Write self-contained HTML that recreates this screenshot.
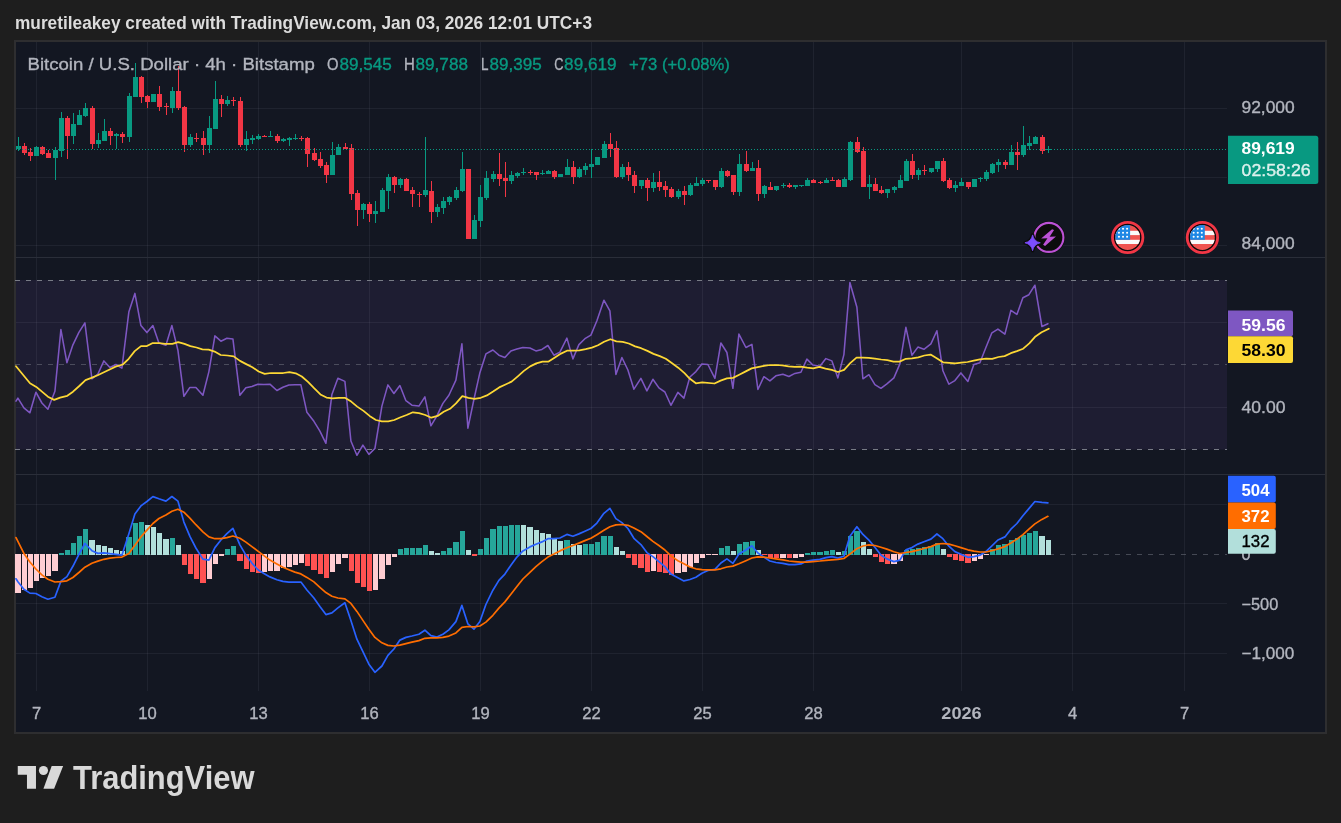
<!DOCTYPE html>
<html lang="en"><head><meta charset="utf-8"><title>BTCUSD chart</title>
<style>html,body{margin:0;padding:0;background:#1e1e1e;}body{width:1341px;height:823px;overflow:hidden}svg{display:block;will-change:transform}</style></head>
<body>
<svg width="1341" height="823" viewBox="0 0 1341 823" font-family="'Liberation Sans', sans-serif">
<rect width="1341" height="823" fill="#1e1e1e"/>
<text x="15" y="28.7" font-size="17.7" font-weight="bold" fill="#dcdcdc" textLength="577" lengthAdjust="spacingAndGlyphs">muretileakey created with TradingView.com, Jan 03, 2026 12:01 UTC+3</text>
<rect x="14" y="40" width="1313" height="694" fill="#2e2e30"/>
<rect x="16" y="42" width="1309" height="690" fill="#131722"/>
<rect x="16" y="280" width="1211" height="169.5" fill="rgba(126,87,194,0.1)"/>
<g shape-rendering="crispEdges" fill="rgba(240,243,250,0.06)">
<rect x="36" y="42" width="1" height="649"/>
<rect x="147" y="42" width="1" height="649"/>
<rect x="258" y="42" width="1" height="649"/>
<rect x="369" y="42" width="1" height="649"/>
<rect x="480" y="42" width="1" height="649"/>
<rect x="591" y="42" width="1" height="649"/>
<rect x="702" y="42" width="1" height="649"/>
<rect x="813" y="42" width="1" height="649"/>
<rect x="961" y="42" width="1" height="649"/>
<rect x="1072" y="42" width="1" height="649"/>
<rect x="1184" y="42" width="1" height="649"/>
<rect x="16" y="108" width="1211" height="1"/>
<rect x="16" y="177" width="1211" height="1"/>
<rect x="16" y="245" width="1211" height="1"/>
<rect x="16" y="322" width="1211" height="1"/>
<rect x="16" y="407" width="1211" height="1"/>
<rect x="16" y="504" width="1211" height="1"/>
<rect x="16" y="603" width="1211" height="1"/>
<rect x="16" y="653" width="1211" height="1"/>
</g>
<g shape-rendering="crispEdges" fill="#2a2e39"><rect x="16" y="257" width="1309" height="1"/><rect x="16" y="474" width="1309" height="1"/></g>
<g shape-rendering="crispEdges" fill="none" stroke-width="1" stroke-dasharray="5 6">
<path d="M15 280.5H1227" stroke="#787b86"/>
<path d="M15 449.5H1227" stroke="#787b86"/>
<path d="M15 364.5H1227" stroke="#787b86" stroke-opacity="0.5"/>
<path d="M15 554.5H1227" stroke="#787b86" stroke-opacity="0.5"/>
</g>
<g shape-rendering="crispEdges" fill="#089981"><rect x="18" y="137" width="1" height="14"/><rect x="16" y="146" width="5" height="3"/><rect x="36" y="146" width="1" height="10"/><rect x="34" y="147" width="5" height="9"/><rect x="55" y="147" width="1" height="33"/><rect x="53" y="150" width="5" height="8"/><rect x="61" y="112" width="1" height="45"/><rect x="59" y="118" width="5" height="33"/><rect x="73" y="113" width="1" height="31"/><rect x="71" y="124" width="5" height="12"/><rect x="79" y="110" width="1" height="15"/><rect x="77" y="115" width="5" height="10"/><rect x="85" y="103" width="1" height="14"/><rect x="83" y="108" width="5" height="8"/><rect x="98" y="133" width="1" height="15"/><rect x="96" y="140" width="5" height="4"/><rect x="104" y="119" width="1" height="22"/><rect x="102" y="131" width="5" height="10"/><rect x="116" y="133" width="1" height="16"/><rect x="114" y="134" width="5" height="2"/><rect x="129" y="93" width="1" height="49"/><rect x="127" y="96" width="5" height="41"/><rect x="135" y="63" width="1" height="34"/><rect x="133" y="77" width="5" height="20"/><rect x="153" y="94" width="1" height="8"/><rect x="151" y="94" width="5" height="8"/><rect x="172" y="87" width="1" height="26"/><rect x="170" y="91" width="5" height="17"/><rect x="190" y="134" width="1" height="13"/><rect x="188" y="137" width="5" height="8"/><rect x="209" y="116" width="1" height="37"/><rect x="207" y="128" width="5" height="17"/><rect x="215" y="81" width="1" height="48"/><rect x="213" y="99" width="5" height="30"/><rect x="227" y="96" width="1" height="10"/><rect x="225" y="100" width="5" height="4"/><rect x="246" y="131" width="1" height="20"/><rect x="244" y="139" width="5" height="6"/><rect x="252" y="135" width="1" height="9"/><rect x="250" y="138" width="5" height="2"/><rect x="258" y="134" width="1" height="6"/><rect x="256" y="136" width="5" height="3"/><rect x="270" y="131" width="1" height="6"/><rect x="268" y="136" width="5" height="1"/><rect x="283" y="138" width="1" height="4"/><rect x="281" y="139" width="5" height="2"/><rect x="289" y="137" width="1" height="9"/><rect x="287" y="138" width="5" height="2"/><rect x="295" y="134" width="1" height="6"/><rect x="293" y="138" width="5" height="1"/><rect x="332" y="142" width="1" height="33"/><rect x="330" y="155" width="5" height="20"/><rect x="338" y="144" width="1" height="11"/><rect x="336" y="147" width="5" height="8"/><rect x="363" y="203" width="1" height="16"/><rect x="361" y="204" width="5" height="6"/><rect x="375" y="201" width="1" height="22"/><rect x="373" y="211" width="5" height="3"/><rect x="382" y="188" width="1" height="24"/><rect x="380" y="190" width="5" height="22"/><rect x="388" y="174" width="1" height="35"/><rect x="386" y="177" width="5" height="14"/><rect x="400" y="178" width="1" height="10"/><rect x="398" y="179" width="5" height="6"/><rect x="425" y="137" width="1" height="60"/><rect x="423" y="190" width="5" height="5"/><rect x="437" y="204" width="1" height="13"/><rect x="435" y="207" width="5" height="5"/><rect x="443" y="197" width="1" height="17"/><rect x="441" y="201" width="5" height="7"/><rect x="449" y="196" width="1" height="9"/><rect x="447" y="197" width="5" height="5"/><rect x="456" y="187" width="1" height="13"/><rect x="454" y="190" width="5" height="8"/><rect x="462" y="152" width="1" height="40"/><rect x="460" y="169" width="5" height="22"/><rect x="474" y="215" width="1" height="24"/><rect x="472" y="220" width="5" height="19"/><rect x="480" y="185" width="1" height="42"/><rect x="478" y="197" width="5" height="24"/><rect x="486" y="171" width="1" height="29"/><rect x="484" y="178" width="5" height="20"/><rect x="493" y="171" width="1" height="11"/><rect x="491" y="174" width="5" height="5"/><rect x="511" y="171" width="1" height="13"/><rect x="509" y="175" width="5" height="6"/><rect x="517" y="172" width="1" height="6"/><rect x="515" y="173" width="5" height="3"/><rect x="523" y="168" width="1" height="7"/><rect x="521" y="172" width="5" height="1"/><rect x="542" y="170" width="1" height="5"/><rect x="540" y="173" width="5" height="1"/><rect x="548" y="170" width="1" height="4"/><rect x="546" y="171" width="5" height="3"/><rect x="560" y="174" width="1" height="3"/><rect x="558" y="174" width="5" height="3"/><rect x="567" y="159" width="1" height="16"/><rect x="565" y="167" width="5" height="8"/><rect x="579" y="167" width="1" height="11"/><rect x="577" y="169" width="5" height="8"/><rect x="585" y="163" width="1" height="12"/><rect x="583" y="166" width="5" height="4"/><rect x="591" y="149" width="1" height="29"/><rect x="589" y="164" width="5" height="3"/><rect x="597" y="157" width="1" height="8"/><rect x="595" y="157" width="5" height="8"/><rect x="604" y="141" width="1" height="17"/><rect x="602" y="144" width="5" height="14"/><rect x="622" y="164" width="1" height="15"/><rect x="620" y="167" width="5" height="10"/><rect x="641" y="180" width="1" height="9"/><rect x="639" y="180" width="5" height="6"/><rect x="653" y="173" width="1" height="19"/><rect x="651" y="182" width="5" height="6"/><rect x="678" y="189" width="1" height="10"/><rect x="676" y="191" width="5" height="6"/><rect x="690" y="183" width="1" height="13"/><rect x="688" y="185" width="5" height="10"/><rect x="696" y="177" width="1" height="9"/><rect x="694" y="183" width="5" height="3"/><rect x="702" y="178" width="1" height="8"/><rect x="700" y="180" width="5" height="4"/><rect x="721" y="168" width="1" height="20"/><rect x="719" y="171" width="5" height="16"/><rect x="739" y="154" width="1" height="42"/><rect x="737" y="164" width="5" height="28"/><rect x="752" y="162" width="1" height="9"/><rect x="750" y="168" width="5" height="3"/><rect x="764" y="185" width="1" height="13"/><rect x="762" y="186" width="5" height="8"/><rect x="776" y="186" width="1" height="5"/><rect x="774" y="186" width="5" height="4"/><rect x="783" y="183" width="1" height="5"/><rect x="781" y="185" width="5" height="1"/><rect x="795" y="185" width="1" height="4"/><rect x="793" y="185" width="5" height="2"/><rect x="801" y="185" width="1" height="2"/><rect x="799" y="185" width="5" height="1"/><rect x="807" y="178" width="1" height="8"/><rect x="805" y="180" width="5" height="6"/><rect x="826" y="178" width="1" height="5"/><rect x="824" y="180" width="5" height="3"/><rect x="844" y="177" width="1" height="10"/><rect x="842" y="179" width="5" height="8"/><rect x="850" y="141" width="1" height="40"/><rect x="848" y="142" width="5" height="38"/><rect x="869" y="175" width="1" height="24"/><rect x="867" y="184" width="5" height="3"/><rect x="887" y="189" width="1" height="9"/><rect x="885" y="189" width="5" height="4"/><rect x="894" y="186" width="1" height="7"/><rect x="892" y="187" width="5" height="3"/><rect x="900" y="175" width="1" height="13"/><rect x="898" y="180" width="5" height="8"/><rect x="906" y="159" width="1" height="22"/><rect x="904" y="161" width="5" height="20"/><rect x="918" y="168" width="1" height="12"/><rect x="916" y="170" width="5" height="5"/><rect x="931" y="168" width="1" height="5"/><rect x="929" y="168" width="5" height="4"/><rect x="937" y="161" width="1" height="11"/><rect x="935" y="161" width="5" height="8"/><rect x="955" y="181" width="1" height="11"/><rect x="953" y="185" width="5" height="3"/><rect x="961" y="178" width="1" height="8"/><rect x="959" y="182" width="5" height="4"/><rect x="974" y="179" width="1" height="8"/><rect x="972" y="179" width="5" height="8"/><rect x="980" y="177" width="1" height="5"/><rect x="978" y="178" width="5" height="1"/><rect x="986" y="170" width="1" height="11"/><rect x="984" y="172" width="5" height="7"/><rect x="992" y="163" width="1" height="11"/><rect x="990" y="164" width="5" height="9"/><rect x="998" y="159" width="1" height="13"/><rect x="996" y="162" width="5" height="3"/><rect x="1011" y="145" width="1" height="20"/><rect x="1009" y="152" width="5" height="13"/><rect x="1023" y="126" width="1" height="31"/><rect x="1021" y="145" width="5" height="10"/><rect x="1029" y="136" width="1" height="14"/><rect x="1027" y="143" width="5" height="3"/><rect x="1035" y="136" width="1" height="8"/><rect x="1033" y="137" width="5" height="7"/><rect x="1048" y="146" width="1" height="7"/><rect x="1046" y="149" width="5" height="1"/></g>
<g shape-rendering="crispEdges" fill="#f23645"><rect x="24" y="143" width="1" height="12"/><rect x="22" y="146" width="5" height="7"/><rect x="30" y="148" width="1" height="13"/><rect x="28" y="152" width="5" height="4"/><rect x="42" y="146" width="1" height="9"/><rect x="40" y="147" width="5" height="7"/><rect x="48" y="150" width="1" height="8"/><rect x="46" y="153" width="5" height="5"/><rect x="67" y="116" width="1" height="43"/><rect x="65" y="118" width="5" height="18"/><rect x="92" y="106" width="1" height="43"/><rect x="90" y="108" width="5" height="36"/><rect x="110" y="128" width="1" height="17"/><rect x="108" y="131" width="5" height="5"/><rect x="122" y="132" width="1" height="11"/><rect x="120" y="134" width="5" height="3"/><rect x="141" y="76" width="1" height="27"/><rect x="139" y="77" width="5" height="20"/><rect x="147" y="95" width="1" height="13"/><rect x="145" y="96" width="5" height="6"/><rect x="159" y="86" width="1" height="25"/><rect x="157" y="94" width="5" height="13"/><rect x="166" y="103" width="1" height="12"/><rect x="164" y="106" width="5" height="1"/><rect x="178" y="66" width="1" height="44"/><rect x="176" y="91" width="5" height="17"/><rect x="184" y="106" width="1" height="46"/><rect x="182" y="107" width="5" height="38"/><rect x="196" y="133" width="1" height="9"/><rect x="194" y="138" width="5" height="1"/><rect x="203" y="131" width="1" height="24"/><rect x="201" y="138" width="5" height="7"/><rect x="221" y="95" width="1" height="22"/><rect x="219" y="99" width="5" height="5"/><rect x="233" y="97" width="1" height="9"/><rect x="231" y="100" width="5" height="1"/><rect x="240" y="97" width="1" height="50"/><rect x="238" y="101" width="5" height="44"/><rect x="264" y="135" width="1" height="2"/><rect x="262" y="136" width="5" height="1"/><rect x="277" y="134" width="1" height="9"/><rect x="275" y="136" width="5" height="5"/><rect x="301" y="136" width="1" height="5"/><rect x="299" y="138" width="5" height="1"/><rect x="307" y="137" width="1" height="30"/><rect x="305" y="138" width="5" height="16"/><rect x="314" y="148" width="1" height="13"/><rect x="312" y="153" width="5" height="7"/><rect x="320" y="152" width="1" height="16"/><rect x="318" y="159" width="5" height="7"/><rect x="326" y="162" width="1" height="21"/><rect x="324" y="165" width="5" height="10"/><rect x="345" y="143" width="1" height="6"/><rect x="343" y="147" width="5" height="2"/><rect x="351" y="144" width="1" height="56"/><rect x="349" y="148" width="5" height="46"/><rect x="357" y="190" width="1" height="36"/><rect x="355" y="193" width="5" height="17"/><rect x="369" y="202" width="1" height="20"/><rect x="367" y="204" width="5" height="10"/><rect x="394" y="176" width="1" height="17"/><rect x="392" y="177" width="5" height="8"/><rect x="406" y="178" width="1" height="13"/><rect x="404" y="179" width="5" height="12"/><rect x="412" y="187" width="1" height="20"/><rect x="410" y="190" width="5" height="4"/><rect x="419" y="192" width="1" height="15"/><rect x="417" y="194" width="5" height="1"/><rect x="431" y="181" width="1" height="42"/><rect x="429" y="191" width="5" height="21"/><rect x="468" y="169" width="1" height="70"/><rect x="466" y="169" width="5" height="70"/><rect x="499" y="153" width="1" height="33"/><rect x="497" y="174" width="5" height="5"/><rect x="505" y="162" width="1" height="35"/><rect x="503" y="178" width="5" height="3"/><rect x="530" y="170" width="1" height="5"/><rect x="528" y="172" width="5" height="1"/><rect x="536" y="172" width="1" height="8"/><rect x="534" y="172" width="5" height="3"/><rect x="554" y="170" width="1" height="9"/><rect x="552" y="171" width="5" height="6"/><rect x="573" y="161" width="1" height="23"/><rect x="571" y="167" width="5" height="10"/><rect x="610" y="133" width="1" height="24"/><rect x="608" y="144" width="5" height="5"/><rect x="616" y="141" width="1" height="37"/><rect x="614" y="148" width="5" height="29"/><rect x="628" y="162" width="1" height="19"/><rect x="626" y="167" width="5" height="8"/><rect x="634" y="171" width="1" height="22"/><rect x="632" y="175" width="5" height="11"/><rect x="647" y="178" width="1" height="23"/><rect x="645" y="180" width="5" height="8"/><rect x="659" y="171" width="1" height="20"/><rect x="657" y="182" width="5" height="5"/><rect x="665" y="181" width="1" height="16"/><rect x="663" y="186" width="5" height="4"/><rect x="671" y="187" width="1" height="11"/><rect x="669" y="189" width="5" height="8"/><rect x="684" y="186" width="1" height="19"/><rect x="682" y="191" width="5" height="4"/><rect x="708" y="180" width="1" height="3"/><rect x="706" y="180" width="5" height="1"/><rect x="715" y="180" width="1" height="10"/><rect x="713" y="180" width="5" height="7"/><rect x="727" y="170" width="1" height="7"/><rect x="725" y="171" width="5" height="5"/><rect x="733" y="175" width="1" height="20"/><rect x="731" y="175" width="5" height="17"/><rect x="746" y="151" width="1" height="21"/><rect x="744" y="164" width="5" height="7"/><rect x="758" y="160" width="1" height="41"/><rect x="756" y="168" width="5" height="26"/><rect x="770" y="182" width="1" height="8"/><rect x="768" y="187" width="5" height="3"/><rect x="789" y="183" width="1" height="5"/><rect x="787" y="185" width="5" height="2"/><rect x="813" y="179" width="1" height="4"/><rect x="811" y="180" width="5" height="3"/><rect x="820" y="181" width="1" height="3"/><rect x="818" y="182" width="5" height="1"/><rect x="832" y="177" width="1" height="4"/><rect x="830" y="180" width="5" height="1"/><rect x="838" y="179" width="1" height="8"/><rect x="836" y="180" width="5" height="7"/><rect x="857" y="137" width="1" height="16"/><rect x="855" y="142" width="5" height="10"/><rect x="863" y="147" width="1" height="40"/><rect x="861" y="151" width="5" height="36"/><rect x="875" y="178" width="1" height="13"/><rect x="873" y="184" width="5" height="7"/><rect x="881" y="186" width="1" height="8"/><rect x="879" y="190" width="5" height="3"/><rect x="912" y="154" width="1" height="25"/><rect x="910" y="161" width="5" height="14"/><rect x="924" y="165" width="1" height="10"/><rect x="922" y="170" width="5" height="1"/><rect x="943" y="158" width="1" height="24"/><rect x="941" y="161" width="5" height="20"/><rect x="949" y="178" width="1" height="11"/><rect x="947" y="180" width="5" height="8"/><rect x="968" y="182" width="1" height="7"/><rect x="966" y="182" width="5" height="5"/><rect x="1005" y="160" width="1" height="9"/><rect x="1003" y="162" width="5" height="3"/><rect x="1017" y="142" width="1" height="28"/><rect x="1015" y="152" width="5" height="3"/><rect x="1042" y="135" width="1" height="19"/><rect x="1040" y="137" width="5" height="14"/></g>
<path d="M16 149.5H1227" stroke="#089981" stroke-width="1" stroke-dasharray="1 2" shape-rendering="crispEdges"/>
<g shape-rendering="crispEdges" fill="#26a69a"><rect x="59" y="553" width="5" height="2"/><rect x="65" y="550" width="5" height="5"/><rect x="71" y="543" width="5" height="12"/><rect x="77" y="536" width="5" height="19"/><rect x="83" y="529" width="5" height="26"/><rect x="126" y="537" width="6" height="18"/><rect x="133" y="523" width="5" height="32"/><rect x="139" y="522" width="5" height="33"/><rect x="170" y="538" width="5" height="17"/><rect x="225" y="549" width="5" height="6"/><rect x="231" y="546" width="5" height="9"/><rect x="398" y="549" width="5" height="6"/><rect x="404" y="548" width="5" height="7"/><rect x="410" y="548" width="5" height="7"/><rect x="416" y="548" width="6" height="7"/><rect x="423" y="545" width="5" height="10"/><rect x="441" y="551" width="5" height="4"/><rect x="447" y="548" width="5" height="7"/><rect x="453" y="542" width="6" height="13"/><rect x="460" y="531" width="5" height="24"/><rect x="478" y="549" width="5" height="6"/><rect x="484" y="538" width="5" height="17"/><rect x="490" y="529" width="6" height="26"/><rect x="497" y="526" width="5" height="29"/><rect x="503" y="526" width="5" height="29"/><rect x="509" y="525" width="5" height="30"/><rect x="515" y="525" width="5" height="30"/><rect x="564" y="540" width="6" height="15"/><rect x="583" y="544" width="5" height="11"/><rect x="589" y="544" width="5" height="11"/><rect x="595" y="542" width="5" height="13"/><rect x="601" y="536" width="6" height="19"/><rect x="608" y="536" width="5" height="19"/><rect x="719" y="548" width="5" height="7"/><rect x="725" y="546" width="5" height="9"/><rect x="737" y="544" width="5" height="11"/><rect x="743" y="542" width="6" height="13"/><rect x="750" y="541" width="5" height="14"/><rect x="805" y="553" width="5" height="2"/><rect x="811" y="552" width="5" height="3"/><rect x="817" y="552" width="6" height="3"/><rect x="824" y="551" width="5" height="4"/><rect x="830" y="550" width="5" height="5"/><rect x="842" y="551" width="5" height="4"/><rect x="848" y="536" width="5" height="19"/><rect x="854" y="531" width="6" height="24"/><rect x="904" y="550" width="5" height="5"/><rect x="910" y="549" width="5" height="6"/><rect x="916" y="548" width="5" height="7"/><rect x="922" y="547" width="5" height="8"/><rect x="928" y="546" width="6" height="9"/><rect x="935" y="543" width="5" height="12"/><rect x="990" y="549" width="5" height="6"/><rect x="996" y="545" width="5" height="10"/><rect x="1002" y="544" width="6" height="11"/><rect x="1009" y="540" width="5" height="15"/><rect x="1015" y="538" width="5" height="17"/><rect x="1021" y="535" width="5" height="20"/><rect x="1027" y="533" width="5" height="22"/><rect x="1033" y="531" width="5" height="24"/></g>
<g shape-rendering="crispEdges" fill="#b2dfdb"><rect x="89" y="540" width="6" height="15"/><rect x="96" y="545" width="5" height="10"/><rect x="102" y="546" width="5" height="9"/><rect x="108" y="548" width="5" height="7"/><rect x="114" y="550" width="5" height="5"/><rect x="120" y="551" width="5" height="4"/><rect x="145" y="525" width="5" height="30"/><rect x="151" y="527" width="5" height="28"/><rect x="157" y="533" width="5" height="22"/><rect x="163" y="539" width="6" height="16"/><rect x="176" y="545" width="5" height="10"/><rect x="429" y="551" width="5" height="4"/><rect x="435" y="553" width="5" height="2"/><rect x="466" y="550" width="5" height="5"/><rect x="521" y="525" width="5" height="30"/><rect x="527" y="527" width="6" height="28"/><rect x="534" y="530" width="5" height="25"/><rect x="540" y="533" width="5" height="22"/><rect x="546" y="534" width="5" height="21"/><rect x="552" y="539" width="5" height="16"/><rect x="558" y="541" width="5" height="14"/><rect x="571" y="544" width="5" height="11"/><rect x="577" y="545" width="5" height="10"/><rect x="614" y="547" width="5" height="8"/><rect x="620" y="551" width="5" height="4"/><rect x="731" y="551" width="5" height="4"/><rect x="756" y="550" width="5" height="5"/><rect x="836" y="552" width="5" height="3"/><rect x="861" y="542" width="5" height="13"/><rect x="867" y="549" width="5" height="6"/><rect x="941" y="549" width="5" height="6"/><rect x="1039" y="536" width="6" height="19"/><rect x="1046" y="540" width="5" height="15"/></g>
<g shape-rendering="crispEdges" fill="#ffcdd2"><rect x="15" y="554" width="6" height="39"/><rect x="22" y="554" width="5" height="36"/><rect x="28" y="554" width="5" height="34"/><rect x="34" y="554" width="5" height="27"/><rect x="40" y="554" width="5" height="24"/><rect x="46" y="554" width="5" height="22"/><rect x="52" y="554" width="6" height="17"/><rect x="207" y="554" width="5" height="25"/><rect x="213" y="554" width="5" height="10"/><rect x="219" y="554" width="5" height="2"/><rect x="262" y="554" width="5" height="18"/><rect x="268" y="554" width="5" height="17"/><rect x="274" y="554" width="6" height="17"/><rect x="281" y="554" width="5" height="14"/><rect x="287" y="554" width="5" height="13"/><rect x="293" y="554" width="5" height="11"/><rect x="299" y="554" width="5" height="9"/><rect x="330" y="554" width="5" height="18"/><rect x="336" y="554" width="5" height="10"/><rect x="342" y="554" width="6" height="4"/><rect x="373" y="554" width="5" height="36"/><rect x="379" y="554" width="6" height="25"/><rect x="386" y="554" width="5" height="11"/><rect x="392" y="554" width="5" height="3"/><rect x="651" y="554" width="5" height="17"/><rect x="675" y="554" width="6" height="19"/><rect x="682" y="554" width="5" height="18"/><rect x="688" y="554" width="5" height="13"/><rect x="694" y="554" width="5" height="9"/><rect x="700" y="554" width="5" height="4"/><rect x="706" y="554" width="5" height="1"/><rect x="712" y="554" width="6" height="1"/><rect x="780" y="554" width="6" height="4"/><rect x="793" y="554" width="5" height="4"/><rect x="799" y="554" width="5" height="3"/><rect x="891" y="554" width="6" height="10"/><rect x="898" y="554" width="5" height="7"/><rect x="972" y="554" width="5" height="7"/><rect x="978" y="554" width="5" height="5"/><rect x="984" y="554" width="5" height="1"/></g>
<g shape-rendering="crispEdges" fill="#ff5252"><rect x="182" y="554" width="5" height="11"/><rect x="188" y="554" width="5" height="20"/><rect x="194" y="554" width="5" height="25"/><rect x="200" y="554" width="6" height="29"/><rect x="237" y="554" width="6" height="7"/><rect x="244" y="554" width="5" height="15"/><rect x="250" y="554" width="5" height="18"/><rect x="256" y="554" width="5" height="19"/><rect x="305" y="554" width="5" height="12"/><rect x="311" y="554" width="6" height="16"/><rect x="318" y="554" width="5" height="20"/><rect x="324" y="554" width="5" height="24"/><rect x="349" y="554" width="5" height="17"/><rect x="355" y="554" width="5" height="29"/><rect x="361" y="554" width="5" height="33"/><rect x="367" y="554" width="5" height="37"/><rect x="472" y="554" width="5" height="2"/><rect x="626" y="554" width="5" height="4"/><rect x="632" y="554" width="5" height="11"/><rect x="638" y="554" width="6" height="14"/><rect x="645" y="554" width="5" height="18"/><rect x="657" y="554" width="5" height="18"/><rect x="663" y="554" width="5" height="19"/><rect x="669" y="554" width="5" height="21"/><rect x="762" y="554" width="5" height="1"/><rect x="768" y="554" width="5" height="4"/><rect x="774" y="554" width="5" height="4"/><rect x="787" y="554" width="5" height="4"/><rect x="873" y="554" width="5" height="3"/><rect x="879" y="554" width="5" height="8"/><rect x="885" y="554" width="5" height="10"/><rect x="947" y="554" width="5" height="3"/><rect x="953" y="554" width="5" height="6"/><rect x="959" y="554" width="5" height="7"/><rect x="965" y="554" width="6" height="9"/></g>
<path d="M16.0 401.2 L17.9 398.1 L23.9 407.8 L29.9 412.8 L35.9 392.2 L41.9 403.0 L47.9 409.2 L54.9 391.3 L60.9 329.6 L66.9 362.7 L72.9 344.8 L78.9 332.3 L84.9 322.8 L91.9 378.8 L97.9 374.0 L103.9 360.9 L109.9 367.5 L115.9 364.5 L121.9 368.1 L128.9 311.7 L134.9 293.4 L140.9 325.6 L146.9 332.6 L152.9 325.6 L158.9 343.0 L165.9 345.3 L171.9 325.6 L177.9 350.2 L183.9 396.3 L189.9 387.4 L195.9 387.4 L202.9 395.3 L208.9 371.6 L214.9 335.9 L220.9 341.2 L226.9 338.2 L232.9 338.9 L239.9 395.3 L245.9 387.8 L251.9 386.4 L257.9 384.2 L263.9 384.6 L269.9 384.2 L276.9 390.5 L282.9 387.3 L288.9 385.1 L294.9 384.8 L300.9 384.8 L306.9 412.3 L313.9 421.3 L319.9 431.1 L325.9 443.3 L331.9 394.4 L337.9 378.3 L344.9 381.4 L350.9 441.0 L356.9 455.3 L362.9 445.1 L368.9 454.4 L374.9 448.5 L381.9 406.1 L387.9 384.9 L393.9 393.5 L399.9 385.5 L405.9 400.7 L411.9 405.2 L418.9 406.1 L424.9 396.8 L430.9 425.8 L436.9 415.9 L442.9 403.4 L448.9 395.3 L455.9 380.1 L461.9 343.8 L467.9 428.2 L473.9 399.5 L479.9 372.7 L485.9 353.9 L492.9 350.0 L498.9 355.2 L504.9 357.5 L510.9 350.9 L516.9 349.1 L522.9 347.6 L529.9 348.0 L535.9 350.9 L541.9 349.4 L547.9 345.5 L553.9 355.2 L559.9 352.1 L566.9 338.1 L572.9 358.9 L578.9 344.6 L584.9 338.7 L590.9 335.1 L596.9 320.8 L603.9 300.2 L609.9 310.9 L615.9 374.5 L621.9 357.5 L627.9 370.0 L633.9 389.2 L640.9 378.4 L646.9 390.9 L652.9 379.3 L658.9 387.9 L664.9 392.0 L670.9 405.3 L677.9 392.4 L683.9 398.1 L689.9 377.0 L695.9 371.6 L701.9 363.9 L707.9 364.5 L714.9 378.4 L720.9 343.0 L726.9 352.5 L732.9 388.3 L738.9 334.1 L745.9 347.5 L751.9 344.4 L757.9 389.5 L763.9 376.7 L769.9 380.9 L775.9 375.8 L782.9 374.3 L788.9 376.5 L794.9 373.4 L800.9 372.2 L806.9 359.1 L812.9 365.0 L819.9 366.3 L825.9 358.6 L831.9 360.9 L837.9 377.9 L843.9 354.6 L849.9 282.5 L856.9 307.2 L862.9 378.8 L868.9 374.7 L874.9 384.7 L880.9 388.3 L886.9 383.8 L893.9 377.9 L899.9 363.9 L905.9 327.3 L911.9 355.2 L917.9 347.1 L923.9 349.3 L930.9 343.9 L936.9 330.8 L942.9 370.8 L948.9 384.2 L954.9 380.6 L960.9 372.9 L967.9 381.5 L973.9 364.5 L979.9 362.7 L985.9 347.5 L991.9 332.8 L997.9 329.1 L1004.9 334.1 L1010.9 310.4 L1016.9 314.4 L1022.9 297.7 L1028.9 294.7 L1034.9 285.2 L1041.9 326.5 L1047.9 323.7" fill="none" stroke="#7e57c2" stroke-width="1.55" stroke-linejoin="round" stroke-linecap="round"/>
<path d="M16.0 366.3 L30.0 383.3 L36.3 386.9 L47.9 396.7 L54.2 399.9 L60.1 397.6 L67.3 395.8 L73.0 391.7 L79.3 386.0 L85.5 380.1 L91.4 377.9 L97.7 375.2 L103.4 372.5 L109.7 369.5 L115.6 366.6 L122.8 364.5 L128.7 358.8 L134.7 351.1 L141.0 346.1 L146.9 346.1 L152.8 343.0 L158.9 343.0 L165.0 343.9 L172.3 343.9 L178.2 342.1 L184.5 343.9 L190.4 346.1 L196.5 347.5 L202.4 349.3 L208.7 349.6 L214.6 351.6 L220.7 355.0 L227.4 355.5 L233.7 356.4 L240.0 360.9 L246.2 364.1 L252.4 367.2 L258.6 371.5 L264.7 373.9 L271.0 373.0 L283.3 373.0 L289.4 372.1 L295.7 373.3 L301.8 376.5 L308.0 381.9 L314.1 388.2 L320.4 394.4 L326.5 397.6 L332.6 398.4 L338.8 397.8 L344.9 397.8 L351.2 401.6 L357.2 406.6 L363.5 410.9 L369.6 415.9 L375.9 420.0 L381.9 421.3 L388.2 421.3 L394.3 420.0 L400.6 417.2 L406.6 415.0 L412.9 412.3 L419.0 413.2 L425.3 415.0 L431.3 417.7 L437.6 415.9 L443.7 411.8 L450.0 408.8 L456.0 403.4 L462.3 396.2 L468.4 397.8 L474.5 398.8 L480.8 397.8 L486.9 395.4 L493.1 391.5 L499.2 387.4 L505.5 384.5 L511.6 381.6 L517.8 376.3 L523.9 370.9 L530.2 366.4 L536.3 363.4 L542.5 361.6 L548.6 361.6 L554.9 357.5 L561.0 353.6 L567.0 350.7 L573.3 350.7 L579.4 350.3 L585.7 349.1 L591.9 347.6 L598.0 345.3 L604.1 341.7 L610.4 339.2 L616.4 341.4 L622.7 341.9 L628.8 343.5 L635.1 346.4 L641.1 348.2 L647.4 350.9 L653.5 353.9 L659.8 356.1 L665.8 358.7 L672.1 363.2 L678.2 367.7 L684.5 373.1 L689.9 378.8 L695.9 383.3 L702.2 382.4 L714.5 383.5 L720.6 380.6 L726.9 378.4 L733.0 377.9 L739.2 374.7 L745.3 371.6 L751.6 368.4 L757.7 367.2 L764.0 365.9 L770.0 365.0 L776.3 365.0 L782.4 365.4 L788.5 366.3 L794.7 366.8 L800.8 366.6 L807.1 367.7 L813.2 368.4 L819.4 366.8 L825.5 368.6 L831.8 369.9 L837.9 372.0 L844.1 369.9 L850.2 363.2 L856.5 357.7 L862.6 357.7 L868.8 357.9 L874.9 358.6 L881.2 359.5 L887.3 360.2 L893.5 361.6 L899.6 361.6 L905.9 358.8 L912.0 358.4 L918.3 357.3 L924.4 355.5 L930.6 354.6 L936.7 358.2 L943.0 362.3 L949.1 362.9 L955.2 363.4 L961.4 362.7 L967.5 362.0 L973.8 360.6 L979.9 359.3 L986.1 358.6 L992.2 358.8 L998.5 357.0 L1004.6 356.1 L1010.8 353.2 L1016.9 351.1 L1023.2 348.7 L1029.3 343.4 L1035.5 336.4 L1041.6 332.3 L1048.8 328.7" fill="none" stroke="#fdd835" stroke-width="1.75" stroke-linejoin="round" stroke-linecap="round"/>
<path d="M16.0 578.8 L17.9 581.7 L23.9 589.2 L29.9 593.1 L35.9 593.5 L41.9 596.7 L47.9 599.2 L54.9 597.2 L60.9 581.1 L66.9 576.6 L72.9 566.3 L78.9 554.3 L84.9 543.5 L91.9 550.7 L97.9 553.4 L103.9 552.8 L109.9 553.7 L115.9 554.3 L121.9 555.2 L128.9 533.7 L134.9 514.0 L140.9 505.9 L146.9 501.5 L152.9 496.6 L158.9 498.8 L165.9 501.1 L171.9 496.5 L177.9 501.1 L183.9 522.1 L189.9 536.4 L195.9 548.0 L202.9 559.1 L208.9 560.2 L214.9 547.6 L220.9 540.0 L226.9 533.7 L232.9 528.3 L239.9 544.8 L245.9 555.2 L251.9 563.1 L257.9 569.7 L263.9 573.5 L269.9 576.9 L276.9 579.8 L282.9 581.4 L288.9 582.1 L294.9 582.1 L300.9 582.1 L306.9 590.0 L313.9 598.0 L319.9 606.6 L325.9 614.6 L331.9 612.9 L337.9 607.9 L344.9 602.8 L350.9 620.4 L356.9 639.2 L362.9 651.7 L368.9 664.2 L374.9 672.3 L381.9 666.0 L387.9 655.3 L393.9 649.0 L399.9 640.1 L405.9 637.4 L411.9 636.0 L418.9 634.2 L424.9 630.2 L430.9 635.6 L436.9 637.0 L442.9 634.2 L448.9 629.9 L455.9 621.6 L461.9 605.4 L467.9 623.9 L473.9 629.2 L479.9 621.5 L485.9 604.5 L492.9 590.2 L498.9 580.4 L504.9 574.1 L510.9 565.2 L516.9 557.1 L522.9 550.9 L529.9 546.9 L535.9 544.2 L541.9 541.9 L547.9 538.7 L553.9 538.7 L559.9 538.0 L566.9 534.4 L572.9 536.2 L578.9 533.9 L584.9 531.2 L590.9 528.5 L596.9 523.1 L603.9 513.3 L609.9 508.4 L615.9 518.6 L621.9 522.6 L627.9 528.5 L633.9 538.3 L640.9 544.6 L646.9 552.6 L652.9 556.6 L658.9 561.6 L664.9 566.6 L670.9 574.1 L677.9 577.7 L683.9 580.9 L689.9 579.5 L695.9 577.2 L701.9 573.2 L707.9 570.5 L714.9 569.3 L720.9 563.0 L726.9 558.9 L732.9 563.4 L738.9 554.1 L745.9 550.0 L751.9 545.8 L757.9 553.0 L763.9 557.1 L769.9 561.0 L775.9 562.5 L782.9 563.4 L788.9 564.6 L794.9 564.6 L800.9 563.9 L806.9 561.0 L812.9 560.2 L819.9 559.4 L825.9 557.6 L831.9 556.6 L837.9 558.0 L843.9 556.2 L849.9 536.2 L856.9 526.7 L862.9 534.4 L868.9 540.1 L874.9 547.3 L880.9 555.0 L886.9 558.9 L893.9 561.6 L899.9 560.2 L905.9 549.8 L911.9 547.6 L917.9 544.1 L923.9 541.7 L930.9 539.1 L936.9 534.0 L942.9 538.7 L948.9 546.2 L954.9 551.6 L960.9 554.3 L967.9 557.3 L973.9 556.6 L979.9 555.2 L985.9 551.6 L991.9 545.9 L997.9 540.0 L1004.9 536.9 L1010.9 529.2 L1016.9 523.5 L1022.9 515.8 L1028.9 508.6 L1034.9 501.5 L1041.9 502.4 L1047.9 502.9" fill="none" stroke="#2962ff" stroke-width="1.7" stroke-linejoin="round" stroke-linecap="round"/>
<path d="M16.0 537.6 L23.9 553.4 L29.9 562.0 L35.9 569.0 L41.9 574.9 L47.9 579.3 L54.9 582.0 L60.9 581.7 L66.9 580.8 L72.9 577.5 L78.9 572.5 L84.9 567.2 L91.9 563.2 L97.9 561.1 L103.9 559.3 L109.9 558.2 L115.9 557.5 L121.9 557.1 L128.9 553.4 L134.9 545.3 L140.9 536.9 L146.9 530.1 L152.9 523.5 L158.9 518.5 L165.9 514.9 L171.9 511.3 L177.9 509.2 L183.9 512.2 L189.9 518.1 L195.9 524.7 L202.9 531.9 L208.9 536.9 L214.9 538.7 L220.9 538.7 L226.9 537.6 L232.9 536.0 L239.9 538.2 L245.9 542.1 L251.9 546.6 L257.9 551.1 L263.9 555.6 L269.9 560.1 L276.9 564.0 L282.9 567.2 L288.9 569.7 L294.9 572.1 L300.9 573.9 L306.9 577.4 L313.9 581.9 L319.9 587.3 L325.9 592.6 L331.9 596.2 L337.9 598.0 L344.9 598.9 L350.9 603.4 L356.9 611.4 L362.9 620.4 L368.9 629.3 L374.9 637.4 L381.9 642.8 L387.9 645.4 L393.9 646.0 L399.9 645.1 L405.9 643.6 L411.9 642.2 L418.9 640.6 L424.9 638.3 L430.9 637.9 L436.9 637.9 L442.9 637.4 L448.9 636.1 L455.9 632.9 L461.9 627.3 L467.9 626.5 L473.9 626.9 L479.9 626.0 L485.9 622.1 L492.9 615.3 L498.9 608.1 L504.9 601.9 L510.9 594.3 L516.9 586.6 L522.9 579.0 L529.9 572.3 L535.9 566.6 L541.9 561.6 L547.9 557.1 L553.9 554.1 L559.9 550.9 L566.9 547.8 L572.9 545.5 L578.9 543.1 L584.9 540.6 L590.9 538.3 L596.9 534.7 L603.9 530.3 L609.9 526.7 L615.9 524.9 L621.9 524.5 L627.9 525.3 L633.9 528.1 L640.9 531.7 L646.9 536.5 L652.9 541.4 L658.9 545.5 L664.9 550.0 L670.9 555.9 L677.9 560.7 L683.9 563.7 L689.9 567.0 L695.9 568.8 L701.9 569.6 L707.9 569.8 L714.9 569.8 L720.9 568.8 L726.9 567.0 L732.9 566.1 L738.9 563.7 L745.9 560.7 L751.9 558.0 L757.9 556.8 L763.9 557.1 L769.9 558.0 L775.9 558.9 L782.9 559.8 L788.9 561.0 L794.9 561.6 L800.9 562.1 L806.9 562.1 L812.9 561.6 L819.9 561.0 L825.9 560.3 L831.9 559.8 L837.9 559.4 L843.9 558.5 L849.9 554.1 L856.9 548.7 L862.9 546.0 L868.9 544.9 L874.9 545.5 L880.9 547.3 L886.9 549.1 L893.9 551.7 L899.9 553.5 L905.9 552.5 L911.9 551.6 L917.9 550.2 L923.9 548.5 L930.9 546.6 L936.9 544.1 L942.9 543.5 L948.9 544.1 L954.9 545.7 L960.9 547.6 L967.9 549.8 L973.9 551.2 L979.9 552.0 L985.9 552.0 L991.9 550.7 L997.9 548.9 L1004.9 546.6 L1010.9 543.0 L1016.9 539.1 L1022.9 534.6 L1028.9 529.2 L1034.9 523.9 L1041.9 519.4 L1047.9 516.3" fill="none" stroke="#ff6d00" stroke-width="1.7" stroke-linejoin="round" stroke-linecap="round"/>
<text x="27.5" y="69.6" font-size="17.2" fill="#b2b5be" stroke="#b2b5be" stroke-width="0.35" textLength="287.3" lengthAdjust="spacingAndGlyphs">Bitcoin / U.S. Dollar · 4h · Bitstamp</text>
<text x="326.9" y="69.6" font-size="17.2" fill="#b2b5be" stroke="#b2b5be" stroke-width="0.35" textLength="11.5" lengthAdjust="spacingAndGlyphs">O</text>
<text x="339.4" y="69.6" font-size="17.2" fill="#089981" stroke="#089981" stroke-width="0.35" textLength="52.5" lengthAdjust="spacingAndGlyphs">89,545</text>
<text x="404" y="69.6" font-size="17.2" fill="#b2b5be" stroke="#b2b5be" stroke-width="0.35" textLength="10.8" lengthAdjust="spacingAndGlyphs">H</text>
<text x="415.5" y="69.6" font-size="17.2" fill="#089981" stroke="#089981" stroke-width="0.35" textLength="52.5" lengthAdjust="spacingAndGlyphs">89,788</text>
<text x="481.1" y="69.6" font-size="17.2" fill="#b2b5be" stroke="#b2b5be" stroke-width="0.35" textLength="7.5" lengthAdjust="spacingAndGlyphs">L</text>
<text x="489.6" y="69.6" font-size="17.2" fill="#089981" stroke="#089981" stroke-width="0.35" textLength="52.2" lengthAdjust="spacingAndGlyphs">89,395</text>
<text x="554.3" y="69.6" font-size="17.2" fill="#b2b5be" stroke="#b2b5be" stroke-width="0.35" textLength="9.2" lengthAdjust="spacingAndGlyphs">C</text>
<text x="564.1" y="69.6" font-size="17.2" fill="#089981" stroke="#089981" stroke-width="0.35" textLength="52.5" lengthAdjust="spacingAndGlyphs">89,619</text>
<text x="629.1" y="69.6" font-size="17.2" fill="#089981" stroke="#089981" stroke-width="0.35" textLength="100.7" lengthAdjust="spacingAndGlyphs">+73 (+0.08%)</text>
<text x="1241.5" y="112.8" font-size="16.6" fill="#b2b5be" stroke="#b2b5be" stroke-width="0.35" textLength="53.2" lengthAdjust="spacingAndGlyphs">92,000</text>
<text x="1241.5" y="249.4" font-size="16.6" fill="#b2b5be" stroke="#b2b5be" stroke-width="0.35" textLength="53.2" lengthAdjust="spacingAndGlyphs">84,000</text>
<text x="1241.5" y="412.9" font-size="16.6" fill="#b2b5be" stroke="#b2b5be" stroke-width="0.35" textLength="44" lengthAdjust="spacingAndGlyphs">40.00</text>
<text x="1241.5" y="560.3" font-size="16.6" fill="#b2b5be" stroke="#b2b5be" stroke-width="0.35" textLength="9" lengthAdjust="spacingAndGlyphs">0</text>
<text x="1241.5" y="609.8" font-size="16.6" fill="#b2b5be" stroke="#b2b5be" stroke-width="0.35" textLength="36.8" lengthAdjust="spacingAndGlyphs">−500</text>
<text x="1241.5" y="658.5" font-size="16.6" fill="#b2b5be" stroke="#b2b5be" stroke-width="0.35" textLength="52.8" lengthAdjust="spacingAndGlyphs">−1,000</text>
<text x="1241.5" y="181.4" font-size="16.6" fill="#b2b5be" stroke="#b2b5be" stroke-width="0.35" textLength="53.2" lengthAdjust="spacingAndGlyphs">88,000</text>
<path d="M1228 135.7H1315.8a2.5 2.5 0 0 1 2.5 2.5V181.39999999999998a2.5 2.5 0 0 1 -2.5 2.5H1228Z" fill="#089981"/>
<text x="1241.5" y="154.4" font-size="16.6" fill="#ffffff" font-weight="bold" textLength="53.2" lengthAdjust="spacingAndGlyphs">89,619</text>
<text x="1241.5" y="175.8" font-size="16.6" fill="rgba(255,255,255,0.82)" stroke="rgba(255,255,255,0.82)" stroke-width="0.35" textLength="69.2" lengthAdjust="spacingAndGlyphs">02:58:26</text>
<path d="M1228 310.6H1291a2 2 0 0 1 2 2V334.20000000000005a2 2 0 0 1 -2 2H1228Z" fill="#7e57c2"/>
<text x="1241.5" y="331" font-size="16.6" fill="#ffffff" font-weight="bold" textLength="44" lengthAdjust="spacingAndGlyphs">59.56</text>
<path d="M1228 336.2H1291a2 2 0 0 1 2 2V361.0a2 2 0 0 1 -2 2H1228Z" fill="#fdd835"/>
<text x="1241.5" y="355.8" font-size="16.6" fill="#000000" font-weight="bold" textLength="44" lengthAdjust="spacingAndGlyphs">58.30</text>
<path d="M1228 475.7H1273.8a2 2 0 0 1 2 2V500.4a2 2 0 0 1 -2 2H1228Z" fill="#2962ff"/>
<text x="1241.5" y="495.7" font-size="16.6" fill="#ffffff" font-weight="bold" textLength="28" lengthAdjust="spacingAndGlyphs">504</text>
<path d="M1228 502.4H1273.8a2 2 0 0 1 2 2V527.0a2 2 0 0 1 -2 2H1228Z" fill="#ff6d00"/>
<text x="1241.5" y="521.9" font-size="16.6" fill="#ffffff" font-weight="bold" textLength="28" lengthAdjust="spacingAndGlyphs">372</text>
<path d="M1228 529H1273.8a2 2 0 0 1 2 2V551.8a2 2 0 0 1 -2 2H1228Z" fill="#b2dfdb"/>
<text x="1241.5" y="546.9" font-size="16.6" fill="#000000" stroke="#000000" stroke-width="0.35" textLength="28" lengthAdjust="spacingAndGlyphs">132</text>
<text x="36.5" y="718.8" font-size="16.6" fill="#b2b5be" stroke="#b2b5be" stroke-width="0.35" text-anchor="middle">7</text>
<text x="147.5" y="718.8" font-size="16.6" fill="#b2b5be" stroke="#b2b5be" stroke-width="0.35" text-anchor="middle">10</text>
<text x="258.5" y="718.8" font-size="16.6" fill="#b2b5be" stroke="#b2b5be" stroke-width="0.35" text-anchor="middle">13</text>
<text x="369.5" y="718.8" font-size="16.6" fill="#b2b5be" stroke="#b2b5be" stroke-width="0.35" text-anchor="middle">16</text>
<text x="480.5" y="718.8" font-size="16.6" fill="#b2b5be" stroke="#b2b5be" stroke-width="0.35" text-anchor="middle">19</text>
<text x="591.5" y="718.8" font-size="16.6" fill="#b2b5be" stroke="#b2b5be" stroke-width="0.35" text-anchor="middle">22</text>
<text x="702.5" y="718.8" font-size="16.6" fill="#b2b5be" stroke="#b2b5be" stroke-width="0.35" text-anchor="middle">25</text>
<text x="813.5" y="718.8" font-size="16.6" fill="#b2b5be" stroke="#b2b5be" stroke-width="0.35" text-anchor="middle">28</text>
<text x="1072.5" y="718.8" font-size="16.6" fill="#b2b5be" stroke="#b2b5be" stroke-width="0.35" text-anchor="middle">4</text>
<text x="1184.5" y="718.8" font-size="16.6" fill="#b2b5be" stroke="#b2b5be" stroke-width="0.35" text-anchor="middle">7</text>
<text x="961.5" y="718.8" font-size="16.6" fill="#b2b5be" font-weight="bold" text-anchor="middle" textLength="40.4" lengthAdjust="spacingAndGlyphs">2026</text>
<g>
<g transform="translate(1048.9 237.4)">
<circle r="16.2" fill="#0c0c0c"/>
<circle r="14.5" fill="#0c0c0c" stroke="#bc52d6" stroke-width="2.1"/>
<path d="M3.18 -8.25 L5.13 -7.37 L0.75 -0.71 L7.07 -0.95 L-3.86 8.67 L-5.81 7.41 L-1.43 0.75 L-7.75 0.99 Z" fill="#bc52d6"/>
</g>
<g transform="translate(1032.6 242.8)">
<path d="M0 -7.9 Q1.3 -1.3 7.7 0 Q1.3 1.3 0 7.9 Q-1.3 1.3 -7.7 0 Q-1.3 -1.3 0 -7.9 Z" fill="#0c0c0c" stroke="#0c0c0c" stroke-width="3.4" stroke-linejoin="round"/>
<path d="M0 -7.9 Q1.3 -1.3 7.7 0 Q1.3 1.3 0 7.9 Q-1.3 1.3 -7.7 0 Q-1.3 -1.3 0 -7.9 Z" fill="#7c4dff" stroke="#7c4dff" stroke-width="0.8" stroke-linejoin="round"/>
</g>
<g transform="translate(1127.7 237.5)">
<circle r="13.9" fill="#0a0a0a"/>
<circle r="15.2" fill="none" stroke="#f23645" stroke-width="2.8"/>
<clipPath id="fc1127"><circle r="12.4"/></clipPath>
<g clip-path="url(#fc1127)">
<rect x="-13" y="-13" width="26" height="26" fill="#ef5350"/>
<rect x="-13" y="-6.7" width="26" height="4.3" fill="#fafafa"/>
<rect x="-13" y="2.3" width="26" height="4.2" fill="#fafafa"/>
<rect x="-13" y="-13" width="15.4" height="15.3" fill="#1e88e5"/>
<circle cx="-8.75" cy="-8.7" r="1.05" fill="#ffffff"/>
<circle cx="-8.75" cy="-4.7" r="1.05" fill="#ffffff"/>
<circle cx="-8.75" cy="-0.7" r="1.05" fill="#ffffff"/>
<circle cx="-4.65" cy="-8.7" r="1.05" fill="#ffffff"/>
<circle cx="-4.65" cy="-4.7" r="1.05" fill="#ffffff"/>
<circle cx="-4.65" cy="-0.7" r="1.05" fill="#ffffff"/>
<circle cx="-0.6" cy="-8.7" r="1.05" fill="#ffffff"/>
<circle cx="-0.6" cy="-4.7" r="1.05" fill="#ffffff"/>
<circle cx="-0.6" cy="-0.7" r="1.05" fill="#ffffff"/>
</g></g>
<g transform="translate(1202.4 237.5)">
<circle r="13.9" fill="#0a0a0a"/>
<circle r="15.2" fill="none" stroke="#f23645" stroke-width="2.8"/>
<clipPath id="fc1202"><circle r="12.4"/></clipPath>
<g clip-path="url(#fc1202)">
<rect x="-13" y="-13" width="26" height="26" fill="#ef5350"/>
<rect x="-13" y="-6.7" width="26" height="4.3" fill="#fafafa"/>
<rect x="-13" y="2.3" width="26" height="4.2" fill="#fafafa"/>
<rect x="-13" y="-13" width="15.4" height="15.3" fill="#1e88e5"/>
<circle cx="-8.75" cy="-8.7" r="1.05" fill="#ffffff"/>
<circle cx="-8.75" cy="-4.7" r="1.05" fill="#ffffff"/>
<circle cx="-8.75" cy="-0.7" r="1.05" fill="#ffffff"/>
<circle cx="-4.65" cy="-8.7" r="1.05" fill="#ffffff"/>
<circle cx="-4.65" cy="-4.7" r="1.05" fill="#ffffff"/>
<circle cx="-4.65" cy="-0.7" r="1.05" fill="#ffffff"/>
<circle cx="-0.6" cy="-8.7" r="1.05" fill="#ffffff"/>
<circle cx="-0.6" cy="-4.7" r="1.05" fill="#ffffff"/>
<circle cx="-0.6" cy="-0.7" r="1.05" fill="#ffffff"/>
</g></g>
</g>
<g fill="#d9d9d9">
<path d="M17.76 765.95H35.98V788.74H26.97V774.87H17.76Z"/>
<circle cx="43.45" cy="770.5" r="4.56"/>
<path d="M51.69 765.95H63.13L54.11 788.74H43.45Z"/>
<text x="73" y="788.74" font-size="33" font-weight="bold" textLength="181.5" lengthAdjust="spacingAndGlyphs">TradingView</text>
</g>
</svg>
</body></html>
